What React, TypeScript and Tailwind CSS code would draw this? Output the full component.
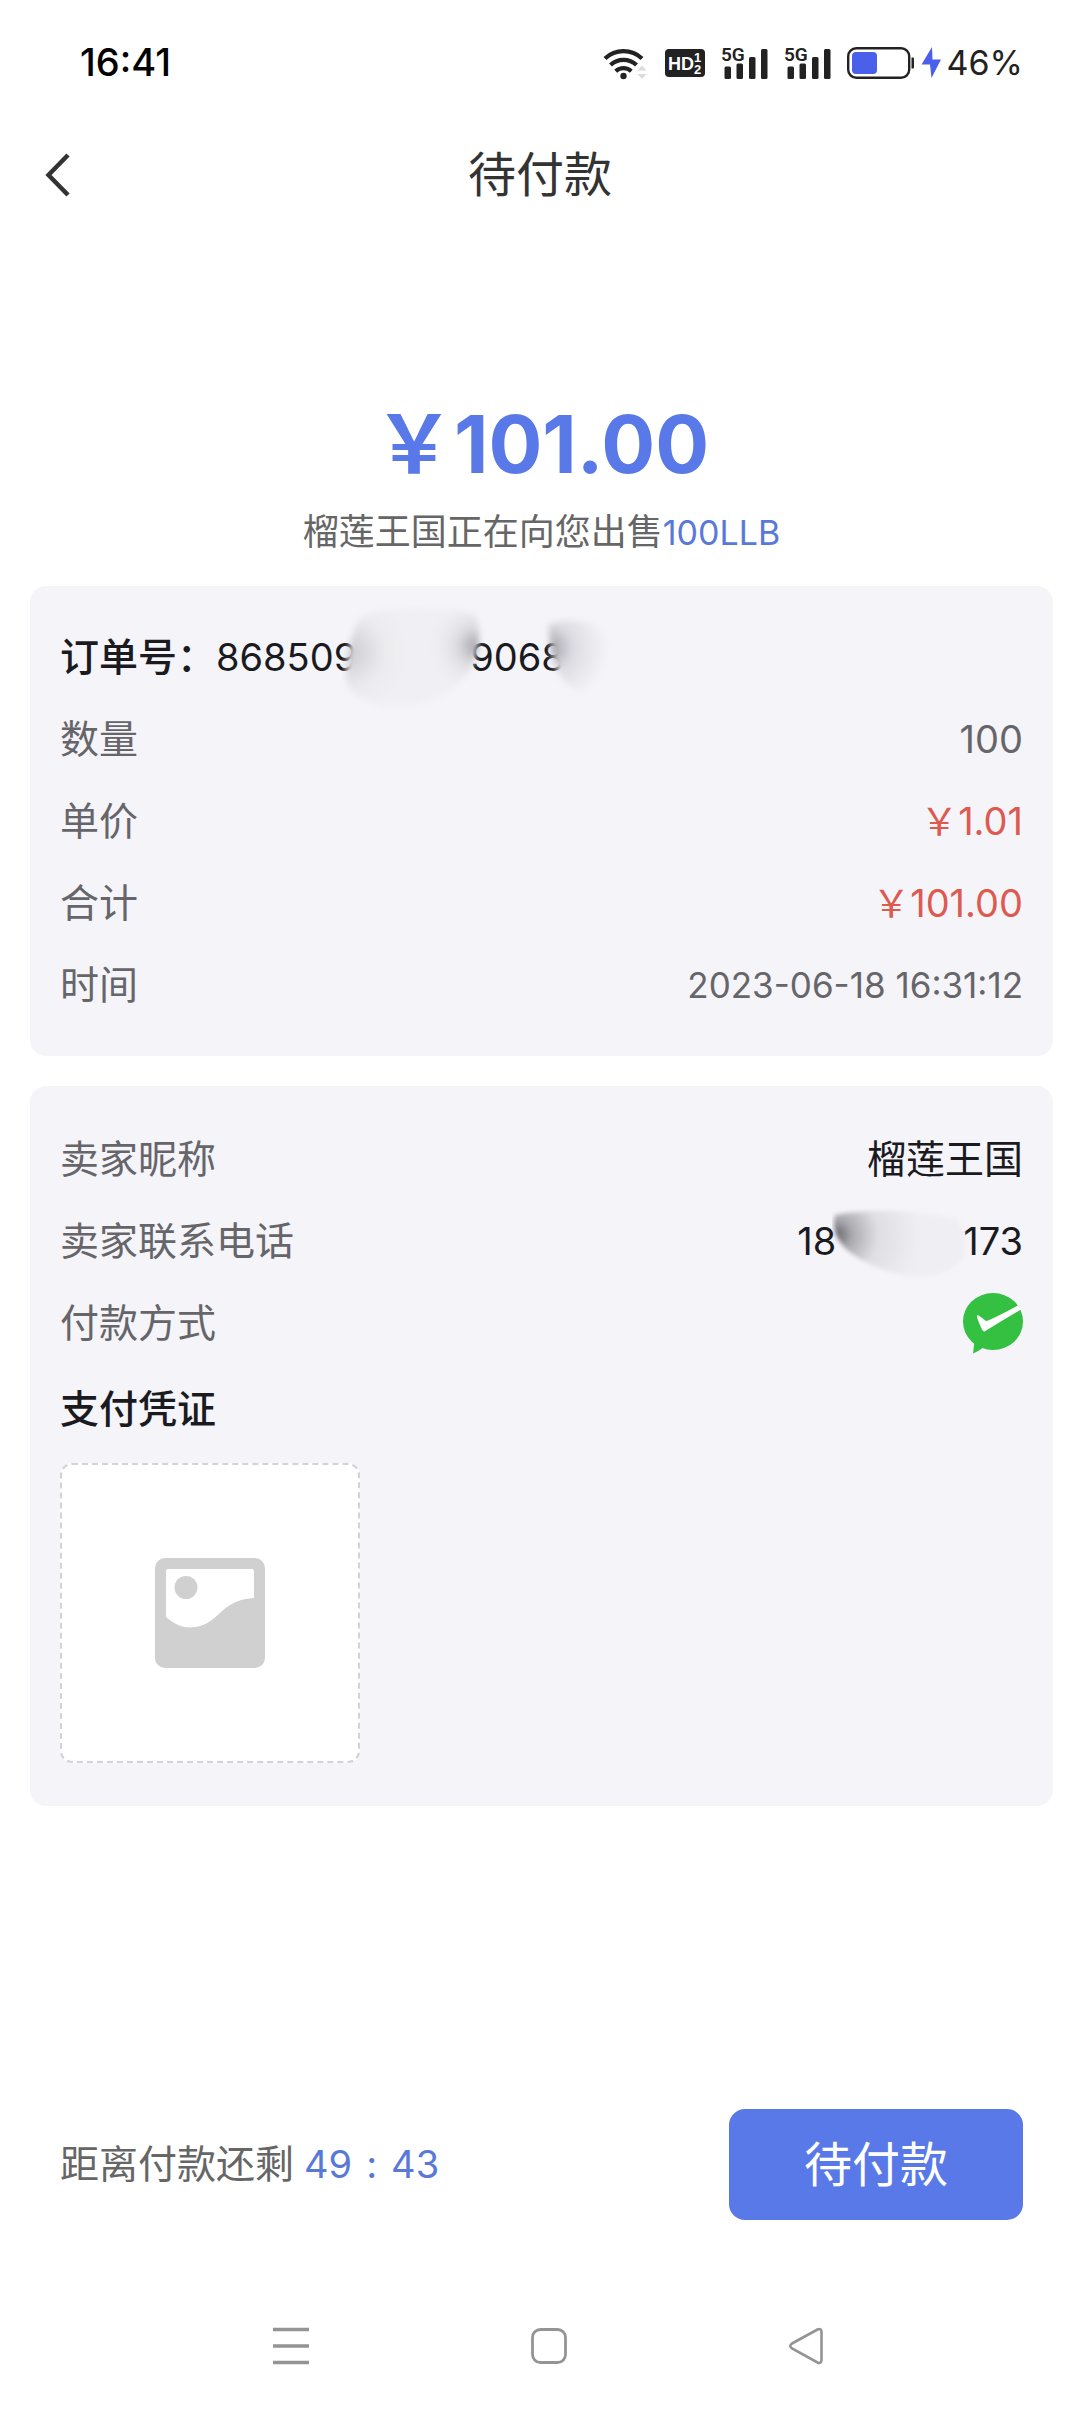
import type { ReactNode } from 'react';

function WifiIcon() {
  return (
    <svg className="h-[36px] w-[46px]" viewBox="0 0 46 36" fill="none" aria-label="Wi-Fi">
      <path d="M2 13.5a27 27 0 0 1 37 0" stroke="#222" strokeWidth="4.2" />
      <path d="M7.5 20a19 19 0 0 1 26 0" stroke="#222" strokeWidth="4.2" />
      <path d="M12.7 26.2a11.5 11.5 0 0 1 15.6 0" stroke="#222" strokeWidth="4.2" />
      <circle cx="20.5" cy="31" r="3.2" fill="#222" />
      <path d="M34.500 25.500l4.500-5 4.500 5zM34.500 29l4.500 5 4.500-5z" fill="#dcdcdc" />
    </svg>
  );
}

function HdIcon() {
  return (
    <svg className="h-[28px] w-[40px]" viewBox="0 0 40 28" aria-label="HD 1 2">
      <rect width="40" height="28" rx="4" fill="#222" />
      <g fill="#fff" fontFamily="'Liberation Sans Narrow', 'Liberation Sans'" fontWeight="700">
        <text x="3" y="21" fontSize="18">HD</text>
        <text x="29" y="13" fontSize="13">1</text>
        <text x="29" y="25" fontSize="13">2</text>
      </g>
    </svg>
  );
}

function SignalIcon() {
  return (
    <svg className="h-[46px] w-[47px]" viewBox="0 -6 47 46" fill="#222" aria-label="5G">
      <text x="0" y="15" fontSize="19" fontFamily="Roboto" fontWeight="600">5G</text>
      <rect x="3.500" y="20.500" width="6.500" height="12.500" rx="1.500" />
      <rect x="15.500" y="17.500" width="6.500" height="15.500" rx="1.500" />
      <rect x="28" y="11" width="6.500" height="22" rx="1.500" />
      <rect x="40" y="3" width="6.500" height="30" rx="1.500" />
    </svg>
  );
}

function BatteryIcon() {
  return (
    <svg className="h-[32px] w-[95px]" viewBox="0 0 95 32" aria-label="充电中">
      <rect x="1.200" y="1.200" width="61" height="29.600" rx="8" fill="#fff" stroke="#222" strokeWidth="2.400" />
      <rect x="5" y="5" width="25" height="22" rx="4" fill="#4a5fea" />
      <path d="M64.500 10.500h1.500q1 0 1 1v9q0 1-1 1h-1.500z" fill="#222" />
      <path d="M85 0L74.500 17.500h8.500L84.500 31 94 12.500h-8.500z" fill="#4a5fea" />
    </svg>
  );
}

function StatusBar() {
  return (
    <div className="flex h-[125px] items-center justify-between pr-[57px] pl-20 text-[38px] text-black">
      <span className="font-medium">16:41</span>
      <div className="flex items-center gap-4 text-[#222]">
        <WifiIcon />
        <HdIcon />
        <SignalIcon />
        <SignalIcon />
        <div className="flex items-center gap-[5px]">
          <BatteryIcon />
          <span className="text-[34px]">46%</span>
        </div>
      </div>
    </div>
  );
}

function Row({ label, children }: { label: string; children: ReactNode }) {
  return (
    <div className="flex h-[82px] items-center justify-between">
      <dt className="text-[#666569]">{label}</dt>
      <dd className="flex items-center text-[38px]">{children}</dd>
    </div>
  );
}

function Price({ value }: { value: string }) {
  return <span className="text-[#dd5a50]">{'\uFFE5' + value}</span>;
}

function OrderSmudges() {
  return (
    <svg className="absolute top-1/2 left-[126px] h-[130px] w-[300px] -translate-y-1/2" viewBox="0 0 300 130" aria-hidden="true">
      <defs>
        <radialGradient id="orderLeft" gradientUnits="userSpaceOnUse" cx="6" cy="60" r="60">
          <stop offset="0" stopColor="#cbcbd0" />
          <stop offset="0.600" stopColor="#ebebef" />
          <stop offset="1" stopColor="#f0f0f4" />
        </radialGradient>
        <radialGradient id="orderRight" gradientUnits="userSpaceOnUse" cx="134" cy="54" r="50">
          <stop offset="0" stopColor="#a4a4aa" />
          <stop offset="0.400" stopColor="#d8d8dd" stopOpacity="0.800" />
          <stop offset="1" stopColor="#f0f0f4" stopOpacity="0" />
        </radialGradient>
        <radialGradient id="orderEnd" gradientUnits="userSpaceOnUse" cx="208" cy="56" r="58">
          <stop offset="0" stopColor="#a0a0a6" />
          <stop offset="0.400" stopColor="#dcdce1" />
          <stop offset="1" stopColor="#f4f4f9" />
        </radialGradient>
        <filter id="soft" x="-20%" y="-20%" width="140%" height="140%">
          <feGaussianBlur stdDeviation="3" />
        </filter>
      </defs>
      <g filter="url(#soft)">
        <path d="M18 26Q60 6 134 24Q144 58 122 86Q94 118 40 114Q10 106 4 90Q2 56 18 26z" fill="url(#orderLeft)" />
        <path d="M70 14Q110 10 134 24Q144 58 122 86Q94 112 70 100z" fill="url(#orderRight)" />
        <path d="M206 32Q250 20 270 48Q276 84 248 106Q222 96 212 72Q208 54 206 32z" fill="url(#orderEnd)" />
      </g>
    </svg>
  );
}

function PhoneSmudge() {
  return (
    <svg className="absolute top-1/2 -left-1 h-[84px] w-[144px] -translate-y-1/2" viewBox="0 0 144 84" aria-hidden="true">
      <defs>
        <radialGradient id="phoneShade" gradientUnits="userSpaceOnUse" cx="4" cy="36" r="84">
          <stop offset="0" stopColor="#66666b" />
          <stop offset="0.200" stopColor="#acacb1" />
          <stop offset="0.500" stopColor="#dfdfe3" />
          <stop offset="1" stopColor="#efeff3" />
        </radialGradient>
        <filter id="phoneSoft" x="-10%" y="-10%" width="120%" height="120%">
          <feGaussianBlur stdDeviation="2" />
        </filter>
      </defs>
      <path
        d="M3 16Q60 6 124 20Q136 32 132 58Q116 78 84 78Q40 72 14 50Q-2 34 3 16z"
        fill="url(#phoneShade)"
        filter="url(#phoneSoft)"
      />
    </svg>
  );
}

function WechatPayIcon() {
  return (
    <svg className="h-[61px] w-[60px]" viewBox="0 0 60 61" role="img" aria-label="微信支付">
      <ellipse cx="30" cy="28.500" rx="30" ry="28.500" fill="#34c040" />
      <path d="M11.500 48L10 60.500Q16 58 21 54z" fill="#34c040" />
      <path d="M14 22.500Q15 21.500 23 28Q25 28.500 55 12.500L58 16.500Q40 27 21.500 38.500Q20 38.500 19 36.500Q13.500 25 14 22.500z" fill="#fff" />
    </svg>
  );
}

function PictureIcon() {
  return (
    <svg className="h-[110px] w-[110px]" viewBox="0 0 110 110" aria-hidden="true">
      <rect width="110" height="110" rx="10" fill="#d0d0d0" />
      <path d="M13 11H97Q99 11 99 13V40C62 42 66 69 34 69.500Q22 69 11 59V13Q11 11 13 11z" fill="#fff" />
      <circle cx="31" cy="29.500" r="11.500" fill="#d0d0d0" />
    </svg>
  );
}

export default function App() {
  return (
    <div className="flex min-h-screen flex-col bg-white font-['Inter','Noto_Sans_CJK_SC',sans-serif] text-[39px] text-[#1a1a1f]">
      <StatusBar />
      <header className="grid h-[100px] grid-cols-[1fr_auto_1fr] items-center px-10">
        <button type="button" aria-label="返回" className="flex h-16 w-16 items-center">
          <svg className="h-[44px] w-[34px]" viewBox="0 0 34 44" fill="none" stroke="#333" strokeWidth="4.500">
            <path d="M28 2L8.500 22L28 42" />
          </svg>
        </button>
        <h1 className="text-[48px] text-[#333]">待付款</h1>
      </header>

      <main className="pt-[167px] pr-[27px] pl-[30px]">
        <p className="text-center text-[80px] leading-[104px] font-bold text-[#5979e8]">{'\uFFE5'}101.00</p>
        <p className="pt-[9px] text-center text-[36px] leading-[54px] text-[#666]">
          榴莲王国正在向您出售<span className="text-[34px] text-[#5979d8]">100LLB</span>
        </p>

        <dl className="mt-[26px] rounded-2xl bg-[#f4f4f9] p-[30px]">
          <div className="flex h-[82px] items-center">
            <dt className="font-medium">{'订单号\uFF1A'}</dt>
            <dd className="relative flex gap-[113px] text-[38px]">
              <span>868509</span>
              <span>9068</span>
              <OrderSmudges />
            </dd>
          </div>
          <Row label="数量">
            <span className="text-[#666569]">100</span>
          </Row>
          <Row label="单价">
            <Price value="1.01" />
          </Row>
          <Row label="合计">
            <Price value="101.00" />
          </Row>
          <Row label="时间">
            <span className="text-[35px] text-[#666569]">2023-06-18 16:31:12</span>
          </Row>
        </dl>

        <section className="mt-[30px] rounded-2xl bg-[#f4f4f9] px-[30px] pt-8 pb-[43px]">
          <dl>
            <Row label="卖家昵称">
              <span className="text-[39px]">榴莲王国</span>
            </Row>
            <Row label="卖家联系电话">
              <span>18</span>
              <span className="relative h-[54px] w-[127px]">
                <PhoneSmudge />
              </span>
              <span>173</span>
            </Row>
            <Row label="付款方式">
              <WechatPayIcon />
            </Row>
          </dl>
          <h2 className="flex h-[91px] items-center font-medium">支付凭证</h2>
          <button
            type="button"
            aria-label="上传支付凭证"
            className="mt-2 flex h-[300px] w-[300px] items-center justify-center rounded-xl border-2 border-dashed border-[#d2d2d8] bg-white"
          >
            <PictureIcon />
          </button>
        </section>
      </main>

      <footer className="mt-auto">
        <div className="flex items-center justify-between pr-[57px] pl-[60px]">
          <p className="flex items-center gap-[10px] text-[#666]">
            距离付款还剩
            <span className="flex gap-[14px] text-[38px] text-[#5979d8]">
              <span>49</span>
              <span>:</span>
              <span>43</span>
            </span>
          </p>
          <button type="button" className="h-[111px] rounded-2xl bg-[#5979e8] px-[75px] text-[48px] text-white">
            待付款
          </button>
        </div>
        <nav className="flex items-center justify-between pt-[105px] pr-[252px] pb-[45px] pl-[270px]" aria-label="系统导航">
          <button type="button" aria-label="最近任务">
            <svg className="h-[42px] w-[42px]" viewBox="0 0 42 42" stroke="#949494" strokeWidth="3.500">
              <path d="M3 4.500H39M3 21H39M3 37.500H39" />
            </svg>
          </button>
          <button type="button" aria-label="主屏幕">
            <svg className="h-[42px] w-[42px]" viewBox="0 0 42 42" fill="none" stroke="#949494" strokeWidth="2.800">
              <rect x="4.500" y="4.500" width="33" height="33" rx="8" />
            </svg>
          </button>
          <button type="button" aria-label="返回上一级">
            <svg className="h-[42px] w-[42px]" viewBox="0 0 42 42" fill="none" stroke="#949494" strokeWidth="2.600">
              <path d="M6 18.500L31.500 4.500Q35.500 2.800 35.500 7V35Q35.500 39.200 31.500 37.500L6 23.500Q2.500 21 6 18.500z" />
            </svg>
          </button>
        </nav>
      </footer>
    </div>
  );
}
